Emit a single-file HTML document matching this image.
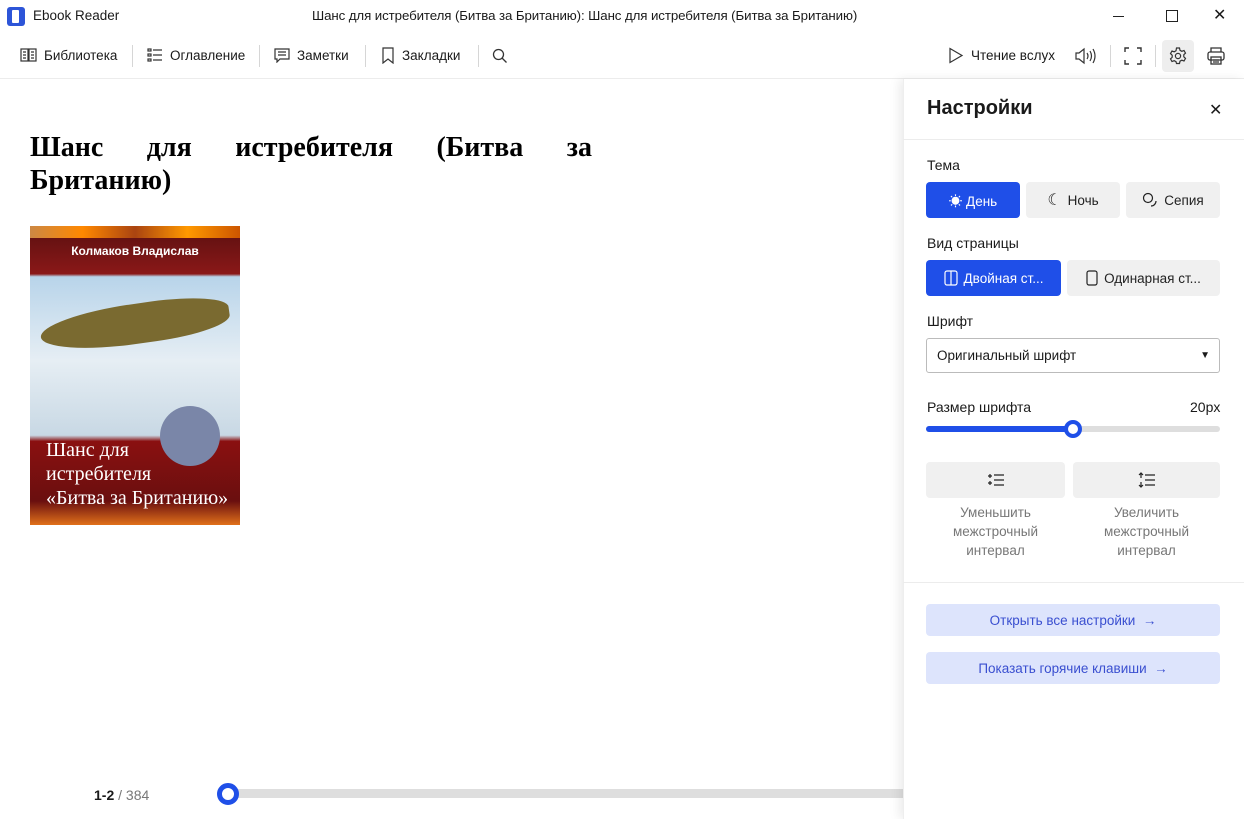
<!DOCTYPE html>
<html><head><meta charset="utf-8"><style>
*{box-sizing:border-box;margin:0;padding:0}
body{width:1244px;height:819px;overflow:hidden;background:#fff;font-family:"Liberation Sans","Noto Sans CJK SC",sans-serif;color:#1a1a1a;position:relative}
.abs{position:absolute}
.tb{font-size:13.5px;display:flex;align-items:center;gap:7px}
.sep{position:absolute;width:1px;height:22px;background:#d6d6d6;top:45px}
.btn{position:absolute;border-radius:4px;display:flex;align-items:center;justify-content:center;font-size:13.5px;gap:6px}
.g{background:#f0f0f0;color:#222}
.b{background:#1f4fe8;color:#fff}
.l{background:#dde4fc;color:#3a4fd0}
svg{display:block}
</style></head><body>
<div class="abs" style="left:7px;top:7px;width:18px;height:19px;background:#2d55d8;border-radius:3px"><div style="margin:3px 0 0 5px;width:7px;height:13px;background:#fff;border-radius:1px"></div></div>
<div class="abs" style="left:33px;top:8px;font-size:13.5px">Ebook Reader</div>
<div class="abs" style="left:312px;top:8px;font-size:13.3px;letter-spacing:-0.1px">Шанс для истребителя (Битва за Британию): Шанс для истребителя (Битва за Британию)</div>
<div class="abs" style="left:1113px;top:16px;width:11px;height:1px;background:#222"></div>
<div class="abs" style="left:1166px;top:10px;width:12px;height:12px;border:1px solid #222"></div>
<div class="abs" style="left:1213px;top:8px;font-size:16px;line-height:16px">✕</div>
<div class="abs tb" style="left:20px;top:47px"><svg width="17" height="16" viewBox="0 0 17 16" fill="none" stroke="#333" stroke-width="1.2"><rect x="1" y="2" width="7" height="12"/><rect x="9" y="2" width="7" height="12"/><path d="M3 5h3M3 8h3M3 11h3M11 5h3M11 8h3M11 11h3"/></svg>Библиотека</div>
<div class="sep" style="left:132px"></div>
<div class="abs tb" style="left:147px;top:47px"><svg width="16" height="16" viewBox="0 0 16 16" fill="none" stroke="#333" stroke-width="1.2"><rect x="1" y="2" width="3" height="2"/><rect x="1" y="7" width="3" height="2"/><rect x="1" y="12" width="3" height="2"/><path d="M6 3h9M6 8h9M6 13h9"/></svg>Оглавление</div>
<div class="sep" style="left:259px"></div>
<div class="abs tb" style="left:274px;top:47px"><svg width="16" height="16" viewBox="0 0 16 16" fill="none" stroke="#333" stroke-width="1.2"><path d="M1 2h14v10H6l-3 3v-3H1z"/><path d="M4 5h8M4 8h8"/></svg>Заметки</div>
<div class="sep" style="left:365px"></div>
<div class="abs tb" style="left:381px;top:47px"><svg width="14" height="17" viewBox="0 0 14 17" fill="none" stroke="#333" stroke-width="1.2"><path d="M2 1h10v15l-5-4-5 4z"/></svg>Закладки</div>
<div class="sep" style="left:478px"></div>
<div class="abs" style="left:492px;top:48px"><svg width="16" height="16" viewBox="0 0 16 16" fill="none" stroke="#333" stroke-width="1.3"><circle cx="6.5" cy="6.5" r="5"/><path d="M10 10l4.5 4.5"/></svg></div>
<div class="abs tb" style="left:948px;top:47px"><svg width="16" height="17" viewBox="0 0 16 17" fill="none" stroke="#333" stroke-width="1.2"><path d="M2 1.5l12 7-12 7z"/></svg>Чтение вслух</div>
<div class="abs" style="left:1075px;top:47px"><svg width="22" height="18" viewBox="0 0 22 18" fill="none" stroke="#333" stroke-width="1.2"><path d="M1 6h3l5-4v14l-5-4H1z"/><path d="M12 6q2 3 0 6M15 4q3 5 0 10M18 2q4 7 0 14"/></svg></div>
<div class="sep" style="left:1110px"></div>
<div class="abs" style="left:1124px;top:47px"><svg width="18" height="18" viewBox="0 0 18 18" fill="none" stroke="#333" stroke-width="1.4"><path d="M1 5V1h4M13 1h4v4M17 13v4h-4M5 17H1v-4"/></svg></div>
<div class="sep" style="left:1155px"></div>
<div class="abs" style="left:1162px;top:40px;width:32px;height:32px;background:#eeeeee;border-radius:4px"></div>
<div class="abs" style="left:1169px;top:47px"><svg width="18" height="18" viewBox="0 0 18 18" fill="none" stroke="#333" stroke-width="1.2"><path d="M7.5 1h3l.5 2.3 1.8 1 2.2-.8 1.5 2.6-1.7 1.6v2.1l1.7 1.6-1.5 2.6-2.2-.8-1.8 1-.5 2.3h-3L7 14.7l-1.8-1-2.2.8-1.5-2.6 1.7-1.6V8.2L1.5 6.6 3 4l2.2.8 1.8-1z"/><circle cx="9" cy="9" r="2.6"/></svg></div>
<div class="abs" style="left:1207px;top:47px"><svg width="18" height="18" viewBox="0 0 18 18" fill="none" stroke="#333" stroke-width="1.3"><path d="M4 5V1h10v4"/><rect x="1" y="5" width="16" height="8" rx="2"/><rect x="4" y="10" width="10" height="7"/><path d="M6 13h6M6 15h6"/></svg></div>
<div class="abs" style="left:0;top:78px;width:1244px;height:1px;background:#ececec"></div>
<div class="abs" style="left:30px;top:131px;width:562px;font-family:'Liberation Serif',serif;font-weight:bold;font-size:28px;line-height:33px;text-align:justify;text-align-last:left;color:#000">Шанс для истребителя (Битва за Британию)</div>
<div class="abs" style="left:30px;top:226px;width:210px;height:299px;background:linear-gradient(180deg,#5a1010 0%,#8a1818 16%,#b8d4ea 17%,#e6eef4 45%,#c8d8e4 70%,#8a1010 72%,#6a0f0f 92%,#e0701a 100%);overflow:hidden">
<div style="position:absolute;left:0;top:0;width:210px;height:12px;background:linear-gradient(90deg,#c84,#f80,#a41,#f90,#c50)"></div>
<div style="position:absolute;left:0;top:18px;width:210px;text-align:center;color:#fff;font-weight:bold;font-size:12px">Колмаков Владислав</div>
<div style="position:absolute;left:10px;top:78px;width:190px;height:40px;background:#7a6a30;border-radius:50% 40% 40% 50%;transform:rotate(-8deg)"></div>
<div style="position:absolute;left:130px;top:180px;width:60px;height:60px;background:#7a86a8;border-radius:50%"></div>
<div style="position:absolute;left:16px;top:212px;color:#fff;font-family:'Liberation Serif',serif;font-size:20px;line-height:24px">Шанс для<br>истребителя<br>«Битва за Британию»</div>
</div>
<div class="abs" style="left:94px;top:787px;font-size:14px"><b>1-2</b> <span style="color:#777">/ 384</span></div>
<div class="abs" style="left:228px;top:789px;width:680px;height:9px;background:#dedede"></div>
<div class="abs" style="left:217px;top:783px;width:22px;height:22px;border:5px solid #1f4fe8;border-radius:50%;background:#fff"></div>
<div class="abs" style="left:903px;top:79px;width:341px;height:740px;background:#fff;box-shadow:-4px 0 10px rgba(0,0,0,.08);border-left:1px solid #eee"></div>
<div class="abs" style="left:927px;top:97px;font-size:20px;font-weight:bold">Настройки</div>
<div class="abs" style="left:1209px;top:100px;font-size:16px">✕</div>
<div class="abs" style="left:903px;top:139px;width:341px;height:1px;background:#ececec"></div>
<div class="abs" style="left:927px;top:157px;font-size:14px">Тема</div>
<div class="btn b" style="left:926px;top:182px;width:94px;height:36px">☀ День</div>
<div class="btn g" style="left:1026px;top:182px;width:94px;height:36px"><span style="font-size:16px">☾</span> Ночь</div>
<div class="btn g" style="left:1126px;top:182px;width:94px;height:36px"><svg width="16" height="16" viewBox="0 0 16 16" fill="none" stroke="#222" stroke-width="1.2"><circle cx="6" cy="6" r="4.5"/><path d="M9 14a5 5 0 0 0 5-5"/></svg>Сепия</div>
<div class="abs" style="left:927px;top:235px;font-size:14px">Вид страницы</div>
<div class="btn b" style="left:926px;top:260px;width:135px;height:36px"><svg width="14" height="16" viewBox="0 0 14 16" fill="none" stroke="#fff" stroke-width="1.2"><rect x="1" y="1" width="12" height="14" rx="2"/><path d="M7 1v14"/></svg>Двойная ст...</div>
<div class="btn g" style="left:1067px;top:260px;width:153px;height:36px"><svg width="12" height="16" viewBox="0 0 12 16" fill="none" stroke="#222" stroke-width="1.2"><rect x="1" y="1" width="10" height="14" rx="2"/></svg>Одинарная ст...</div>
<div class="abs" style="left:927px;top:313px;font-size:14px">Шрифт</div>
<div class="abs" style="left:926px;top:338px;width:294px;height:35px;border:1px solid #bbb;border-radius:3px;font-size:13.5px;padding:9px 10px">Оригинальный шрифт<span style="position:absolute;right:9px;top:11px;font-size:10px">▼</span></div>
<div class="abs" style="left:927px;top:399px;font-size:14px">Размер шрифта</div>
<div class="abs" style="left:1190px;top:399px;font-size:14px">20px</div>
<div class="abs" style="left:926px;top:426px;width:294px;height:6px;border-radius:3px;background:#dedede"></div>
<div class="abs" style="left:926px;top:426px;width:147px;height:6px;border-radius:3px;background:#1f4fe8"></div>
<div class="abs" style="left:1064px;top:420px;width:18px;height:18px;border:4px solid #1f4fe8;border-radius:50%;background:#fff"></div>
<div class="btn g" style="left:926px;top:462px;width:139px;height:36px"><svg width="18" height="14" viewBox="0 0 18 14" fill="none" stroke="#222" stroke-width="1.2"><path d="M1 3h4M3 1v4M1 10h4M3 8v4M7 2h10M7 7h10M7 12h10"/></svg></div>
<div class="btn g" style="left:1073px;top:462px;width:147px;height:36px"><svg width="18" height="16" viewBox="0 0 18 16" fill="none" stroke="#222" stroke-width="1.2"><path d="M3 1v5M1 3l2-2 2 2M3 10v5M1 13l2 2 2-2M7 3h10M7 8h10M7 13h10"/></svg></div>
<div class="abs" style="left:926px;top:503px;width:139px;text-align:center;font-size:13.5px;line-height:19px;color:#777">Уменьшить межстрочный интервал</div>
<div class="abs" style="left:1073px;top:503px;width:147px;text-align:center;font-size:13.5px;line-height:19px;color:#777">Увеличить межстрочный интервал</div>
<div class="abs" style="left:903px;top:582px;width:341px;height:1px;background:#ececec"></div>
<div class="btn l" style="left:926px;top:604px;width:294px;height:32px">Открыть все настройки &nbsp;→</div>
<div class="btn l" style="left:926px;top:652px;width:294px;height:32px">Показать горячие клавиши &nbsp;→</div>
</body></html>
